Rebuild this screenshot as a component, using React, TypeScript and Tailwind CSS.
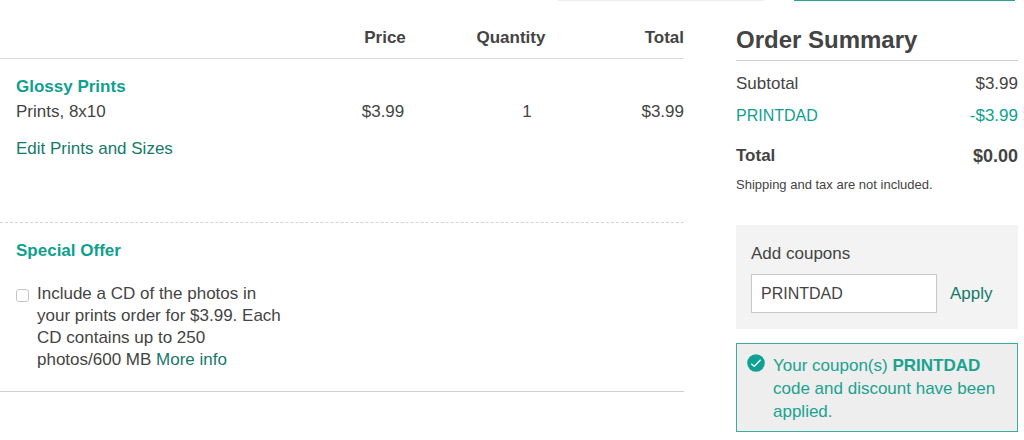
import { useState } from "react"
import { X } from "lucide-react"

const items = [
  { name: "Glossy Prints", description: "Prints, 8x10", price: "$3.99", quantity: 1, total: "$3.99" },
]

function CartTable() {
  return (
    <table className="w-full table-fixed">
      <thead>
        <tr className="h-[57px] border-b border-[#d9d9d9] align-bottom font-bold">
          <td />
          <th scope="col" className="w-[94px] pr-9 pb-2 text-center">Price</th>
          <th scope="col" className="w-[122px] pb-2 text-center">Quantity</th>
          <th scope="col" className="w-[112px] pb-2 text-right">Total</th>
        </tr>
      </thead>
      <tbody>
        {items.map((item) => (
          <tr key={item.name} className="align-top">
            <td className="h-[164px] pt-4 pl-4">
              <h2 className="font-bold text-[#0f9f8f]">{item.name}</h2>
              <p className="leading-[26px]">{item.description}</p>
              <a href="#" className="mt-3 inline-block text-[#16796a]">Edit Prints and Sizes</a>
            </td>
            <td className="pt-[41px] pr-10 text-center">{item.price}</td>
            <td className="pt-[41px] pl-8 text-center">{item.quantity}</td>
            <td className="pt-[41px] text-right">{item.total}</td>
          </tr>
        ))}
      </tbody>
    </table>
  )
}

function SpecialOffer() {
  const [checked, setChecked] = useState(false)

  return (
    <section className="border-t border-b border-t-[#d4d4d4] border-b-[#d0d0d0] pt-4 pb-5 pl-4 [border-top-style:dashed]">
      <h2 className="font-bold text-[#0f9f8f]">Special Offer</h2>
      <div className="mt-5 flex items-start gap-2">
        <input
          id="cd-offer"
          type="checkbox"
          checked={checked}
          onChange={(e) => setChecked(e.target.checked)}
          className="mt-[6px] size-[13px] shrink-0 appearance-none rounded-[3px] border border-[#c4c4c4] bg-white checked:bg-[#0f9f8f]"
        />
        <div className="max-w-[250px] leading-[22px]">
          <label htmlFor="cd-offer">
            Include a CD of the photos in your prints order for $3.99. Each CD contains up to 250 photos/600 MB
          </label>{" "}
          <a href="#" className="text-[#16796a]">More info</a>
        </div>
      </div>
    </section>
  )
}

function OrderSummary() {
  return (
    <section>
      <h2 className="border-b border-[#d0d0d0] pb-1 text-2xl leading-8 font-bold">Order Summary</h2>
      <dl className="mt-[11px]">
        <div className="flex justify-between">
          <dt>Subtotal</dt>
          <dd>$3.99</dd>
        </div>
        <div className="relative mt-2 flex justify-between text-[#0f9f8f]">
          <dt className="text-base leading-6">PRINTDAD</dt>
          <dd>
            -$3.99
            <button
              type="button"
              aria-label="Remove coupon"
              className="absolute top-1/2 left-full ml-[3px] -translate-y-1/2 text-[#999999]"
            >
              <X size={12} strokeWidth={2} />
            </button>
          </dd>
        </div>
        <div className="mt-4 flex justify-between font-bold">
          <dt>Total</dt>
          <dd className="text-lg leading-6">$0.00</dd>
        </div>
      </dl>
      <p className="mt-[7px] text-[13px] leading-5">Shipping and tax are not included.</p>
    </section>
  )
}

function CouponForm() {
  const [code, setCode] = useState("PRINTDAD")

  return (
    <form onSubmit={(e) => e.preventDefault()} className="mt-[30px] bg-[#f3f3f3] px-[15px] pt-[17px] pb-4">
      <label htmlFor="coupon" className="block">Add coupons</label>
      <div className="mt-2 flex items-center gap-[13px]">
        <input
          id="coupon"
          type="text"
          value={code}
          onChange={(e) => setCode(e.target.value)}
          className="h-[39px] w-[186px] border border-[#c8c8c8] bg-white px-[9px] text-base outline-none"
        />
        <button type="submit" className="text-[#16796a]">Apply</button>
      </div>
    </form>
  )
}

function CouponNotice() {
  return (
    <div role="status" className="mt-[14px] flex items-start gap-2 border border-[#3aad9f] bg-[#eeeeee] px-[10px] pt-[10px] pb-2 text-[#1ba290]">
      <svg viewBox="0 0 18 18" className="size-[18px] shrink-0" aria-hidden="true">
        <circle cx="9" cy="9" r="8.8" fill="#0fa294" />
        <path d="M4.3 9.8 7.3 12.4 13.6 5.8" fill="none" stroke="#fff" strokeWidth="1.3" />
      </svg>
      <p className="leading-[23px]">
        Your coupon(s) <strong className="font-bold">PRINTDAD</strong> code and discount have been applied.
      </p>
    </div>
  )
}

export default function App() {
  return (
    <div className="overflow-hidden bg-white font-['Liberation_Sans',Arial,sans-serif] text-[17px] leading-6 text-[#444444]">
      <div className="flex justify-end gap-[30px] pr-[9px]" aria-hidden="true">
        <div className="h-px w-[206px] bg-[#eeeeee]" />
        <div className="h-px w-[221px] bg-[#2ba293]" />
      </div>
      <div className="flex items-start gap-[52px] pr-[6px]">
        <main className="min-w-0 flex-1">
          <CartTable />
          <SpecialOffer />
        </main>
        <aside className="w-[282px] shrink-0 pt-[23px]">
          <OrderSummary />
          <CouponForm />
          <CouponNotice />
        </aside>
      </div>
    </div>
  )
}
